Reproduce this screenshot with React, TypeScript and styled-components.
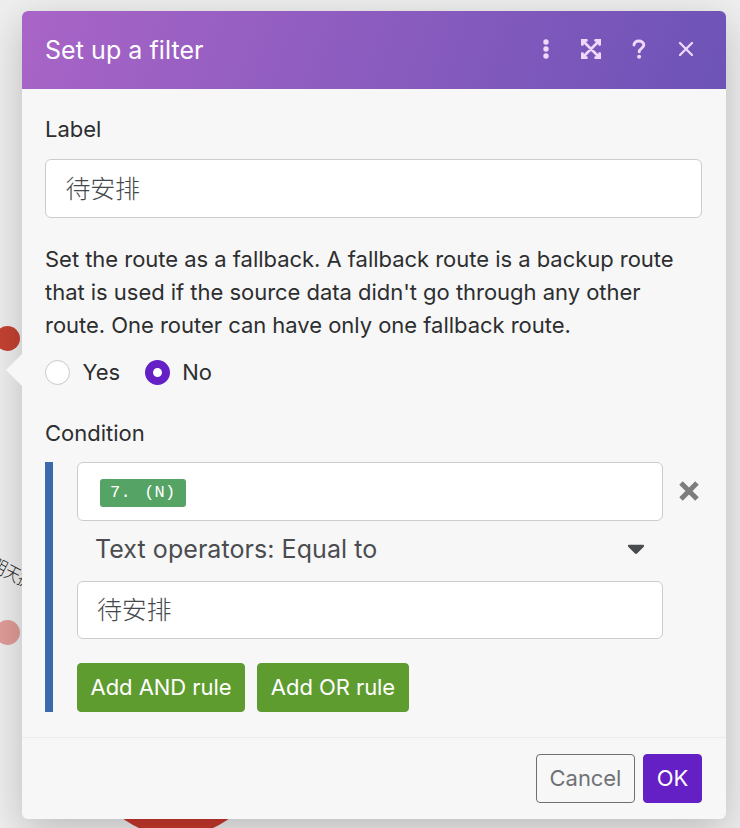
import React from 'react';
import styled, { createGlobalStyle } from 'styled-components';

const GlobalStyle = createGlobalStyle`
  * { box-sizing: border-box; }
  body { margin: 0; background: #ececec; }
  button, input { font-family: inherit; }
`;

const Canvas = styled.div`
  position: relative;
  width: 740px;
  height: 828px;
  overflow: hidden;
  padding: 11px 14px 10px 22px;
  background: #efefef;
  font-family: Inter, 'Noto Sans CJK SC', sans-serif;
  font-size: 22px;
  line-height: 33px;
  color: #2d2e2f;
`;

const RouteDot = styled.span<{ $x: number; $y: number; $size: number; $color: string }>`
  position: absolute;
  left: ${(p) => p.$x}px;
  top: ${(p) => p.$y}px;
  width: ${(p) => p.$size}px;
  height: ${(p) => p.$size}px;
  border-radius: 50%;
  background: ${(p) => p.$color};
`;

const RouteLabel = styled.span`
  position: absolute;
  left: -7px;
  top: 550px;
  font-size: 18.5px;
  font-weight: 300;
  line-height: 26px;
  white-space: nowrap;
  color: #222;
  transform: rotate(27deg) scaleX(0.8);
  transform-origin: 0 50%;
`;

const Panel = styled.section`
  position: relative;
  height: 807.5px;
  display: flex;
  flex-direction: column;
  border-radius: 6px;
  background: #f7f7f7;
  box-shadow: 0 12px 42px rgba(0, 0, 0, 0.22);
`;

const Pointer = styled.span`
  position: absolute;
  left: -16px;
  top: 343px;
  border: 16px solid transparent;
  border-left: 0;
  border-right-color: #f7f7f7;
`;

const Header = styled.header`
  height: 78px;
  flex: none;
  display: flex;
  align-items: center;
  justify-content: space-between;
  padding: 0 18px 1px 23px;
  border-radius: 6px 6px 0 0;
  background: linear-gradient(110deg, #a964c7 0%, #6d53b7 100%);
`;

const Title = styled.h1`
  margin: 1px 0 0;
  font-size: 25px;
  font-weight: 400;
  letter-spacing: 0.06px;
  color: #fff;
`;

const Tools = styled.div`
  display: flex;
  align-items: center;
  margin-bottom: 1.5px;
  color: #f0d8fb;
`;

const Tool = styled.button<{ $width: number }>`
  width: ${(p) => p.$width}px;
  height: 24px;
  display: flex;
  align-items: center;
  justify-content: center;
  padding: 0;
  border: 0;
  background: none;
  color: inherit;
`;

const Body = styled.div`
  flex: 1;
  padding: 24px 24px 0 23px;
`;

const FieldLabel = styled.div`
  height: 33px;
  margin-bottom: 12.5px;
`;

const TextBox = styled.div<{ $inset: number; $drop?: number }>`
  height: 59px;
  display: flex;
  align-items: center;
  padding: ${(p) => p.$drop ?? 0}px ${(p) => p.$inset}px 0;
  border: 1.5px solid #cccccd;
  border-radius: 6px;
  background: #fff;
  font-size: 25px;
  font-weight: 300;
  letter-spacing: -0.2px;
  color: #45484b;
`;

const Help = styled.p`
  margin: 25.5px 0 18px;
  white-space: nowrap;
  letter-spacing: -0.03px;
`;

const Choices = styled.div`
  height: 25px;
  display: flex;
  align-items: center;
  margin-bottom: 32px;
`;

const Choice = styled.label`
  display: flex;
  align-items: center;
  gap: 12.5px;
  margin-right: 24.5px;
`;

const Radio = styled.span<{ $checked?: boolean }>`
  width: 25px;
  height: 25px;
  border-radius: 50%;
  background: #fff;
  border: ${(p) => (p.$checked ? '8px solid #6420c4' : '1.5px solid #c9c9ca')};
`;

const Condition = styled.div`
  height: 250px;
  display: flex;
  margin-top: -0.5px;
  border-left: 8px solid #3a6aab;
  padding-left: 24px;
`;

const Rule = styled.div`
  width: 586px;
  display: flex;
  flex-direction: column;
`;

const Remove = styled.button`
  width: 22px;
  height: 22px;
  margin: 18px 0 0 15px;
  padding: 0;
  border: 0;
  background: none;
  color: #7d7d7d;
  display: flex;
`;

const Token = styled.span`
  height: 28px;
  width: 86px;
  display: flex;
  align-items: center;
  margin-top: 3px;
  padding-left: 10px;
  border-radius: 3px;
  background: #56a366;
  color: #fff;
  font: 400 17px/26px 'Liberation Mono', monospace;
  letter-spacing: 0.2px;
  word-spacing: 3px;
  white-space: pre;
`;

const Operator = styled.div`
  height: 60px;
  display: flex;
  align-items: center;
  justify-content: space-between;
  padding: 0 18px 3px 18px;
  font-size: 25px;
  letter-spacing: 0.06px;
  color: #4a4c4f;
`;

const RuleActions = styled.div`
  display: flex;
  gap: 12px;
  margin-top: 24px;
`;

const Button = styled.button<{ $width: number; $bg: string; $color?: string; $border?: string }>`
  width: ${(p) => p.$width}px;
  height: 48.5px;
  padding: 0;
  border: 1.5px solid ${(p) => p.$border ?? p.$bg};
  border-radius: 4px;
  background: ${(p) => p.$bg};
  color: ${(p) => p.$color ?? '#fff'};
  font-size: 22px;
  line-height: 33px;
  letter-spacing: -0.06px;
  white-space: nowrap;
`;

const Footer = styled.footer`
  height: 81.5px;
  flex: none;
  display: flex;
  justify-content: flex-end;
  gap: 8px;
  padding: 16px 24px 0;
  border-top: 1.5px solid #ececec;
`;

const MoreIcon = () => (
  <svg width="8" height="20" viewBox="0 0 8 20" fill="currentColor">
    <circle cx="4" cy="3" r="2.7" />
    <circle cx="4" cy="10" r="2.7" />
    <circle cx="4" cy="17" r="2.7" />
  </svg>
);

const ExpandIcon = () => (
  <svg width="22" height="22" viewBox="0 0 22 22" fill="none" stroke="currentColor" strokeWidth="2.6">
    <path d="M2.3 7.5V2.3h5.2M14.5 2.3h5.2v5.2M19.7 14.5v5.2h-5.2M7.5 19.7H2.3v-5.2M2.5 2.5l17 17M19.5 2.5l-17 17" />
    <path d="M2 2h6L2 8zM20 2v6l-6-6zM20 20h-6l6-6zM2 20v-6l6 6z" fill="currentColor" stroke="none" />
  </svg>
);

const HelpIcon = () => (
  <svg width="14" height="20" viewBox="0 0 14 20" fill="none">
    <path d="M2 6.1C2 3.5 4 2 6.8 2s5 1.6 5 4.1c0 3.3-4.6 3.3-4.6 6.8" stroke="currentColor" strokeWidth="2.9" strokeLinecap="round" />
    <circle cx="7.1" cy="17.8" r="2" fill="currentColor" />
  </svg>
);

const CloseIcon = () => (
  <svg width="16" height="16" viewBox="0 0 16 16" stroke="currentColor" strokeWidth="2.3" strokeLinecap="round">
    <path d="M2 2l12 12M14 2L2 14" />
  </svg>
);

const RemoveIcon = () => (
  <svg width="22" height="22" viewBox="0 0 22 22" stroke="currentColor" strokeWidth="5">
    <path d="M3 3l16 16M19 3L3 19" />
  </svg>
);

const CaretIcon = () => (
  <svg width="18" height="11" viewBox="0 0 18 11" fill="#494c4e">
    <path d="M2 .8h14c1 0 1.5 1.2.8 1.9l-6.5 6.6c-.8.8-1.8.8-2.6 0L1.2 2.7C.5 2 1 .8 2 .8z" />
  </svg>
);

export default function App() {
  return (
    <Canvas>
      <GlobalStyle />
      <RouteDot $x={-5} $y={326} $size={25} $color="#c44332" />
      <RouteDot $x={-5} $y={619.5} $size={25} $color="#e19d99" />
      <RouteLabel>明天提</RouteLabel>
      <RouteDot $x={85.5} $y={655.5} $size={180} $color="#c9382d" />
      <Panel>
        <Pointer />
        <Header>
          <Title>Set up a filter</Title>
          <Tools>
            <Tool $width={43} aria-label="More"><MoreIcon /></Tool>
            <Tool $width={47} aria-label="Expand"><ExpandIcon /></Tool>
            <Tool $width={50} aria-label="Help"><HelpIcon /></Tool>
            <Tool $width={44} aria-label="Close"><CloseIcon /></Tool>
          </Tools>
        </Header>
        <Body>
          <FieldLabel>Label</FieldLabel>
          <TextBox $inset={19.5} $drop={2}>待安排</TextBox>
          <Help>
            Set the route as a fallback. A fallback route is a backup route<br />
            that is used if the source data didn't go through any other<br />
            route. One router can have only one fallback route.
          </Help>
          <Choices>
            <Choice><Radio />Yes</Choice>
            <Choice><Radio $checked />No</Choice>
          </Choices>
          <FieldLabel>Condition</FieldLabel>
          <Condition>
            <Rule>
              <TextBox $inset={22}><Token>7. (N)</Token></TextBox>
              <Operator>Text operators: Equal to<CaretIcon /></Operator>
              <TextBox $inset={19}>待安排</TextBox>
              <RuleActions>
                <Button $width={168} $bg="#5e9c2f">Add AND rule</Button>
                <Button $width={152} $bg="#5e9c2f">Add OR rule</Button>
              </RuleActions>
            </Rule>
            <Remove aria-label="Remove rule"><RemoveIcon /></Remove>
          </Condition>
        </Body>
        <Footer>
          <Button $width={99} $bg="transparent" $color="#707276" $border="#6d7072">Cancel</Button>
          <Button $width={59} $bg="#6420c4">OK</Button>
        </Footer>
      </Panel>
    </Canvas>
  );
}
